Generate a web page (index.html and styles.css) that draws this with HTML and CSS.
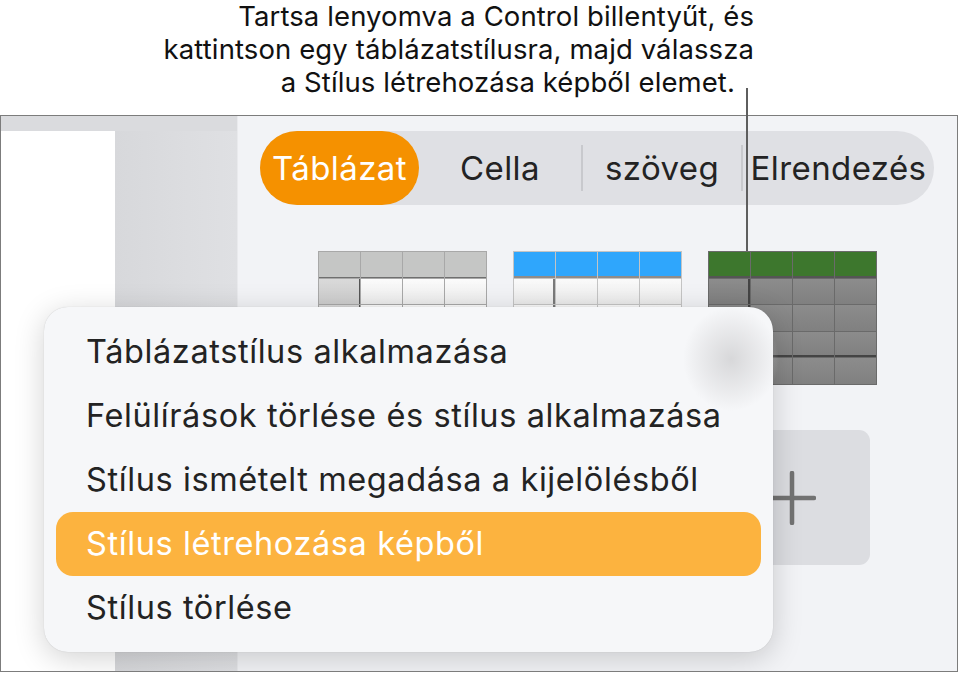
FILE: index.html
```html
<!DOCTYPE html>
<html lang="hu">
<head>
  <meta charset="UTF-8" />
  <meta name="viewport" content="width=device-width, initial-scale=1" />
  <title>Táblázatstílus létrehozása képből</title>
  <link rel="stylesheet" href="styles.css">
</head>
<body>
  <div class="callout">
    <p>Tartsa lenyomva a Control billentyűt, és<br>kattintson egy táblázatstílusra, majd válassza<br><span class="last">a Stílus létrehozása képből elemet.</span></p>
  </div>
  <div class="leader"></div>

  <div class="window">
    <aside class="sidebar">
      <div class="page"></div>
      <div class="gutter"></div>
    </aside>

    <main class="panel">
      <nav class="tabs">
        <span class="tab active">Táblázat</span>
        <span class="tab cell">Cella</span>
        <span class="sep"></span>
        <span class="tab text">szöveg</span>
        <span class="sep"></span>
        <span class="tab layout">Elrendezés</span>
      </nav>

      <div class="styles">
        <div class="thumb gray">
          <i class="h"></i><i class="h"></i><i class="h"></i><i class="h"></i>
          <i class="c1"></i><i></i><i></i><i></i>
          <i class="c1"></i><i></i><i></i><i></i>
          <i class="c1"></i><i></i><i></i><i></i>
          <i class="c1"></i><i></i><i></i><i></i>
        </div>
        <div class="thumb blue">
          <i class="h"></i><i class="h"></i><i class="h"></i><i class="h"></i>
          <i class="c1"></i><i></i><i></i><i></i>
          <i class="c1"></i><i></i><i></i><i></i>
          <i class="c1"></i><i></i><i></i><i></i>
          <i class="c1"></i><i></i><i></i><i></i>
        </div>
        <div class="thumb green">
          <i class="h"></i><i class="h"></i><i class="h"></i><i class="h"></i>
          <i class="c1"></i><i></i><i></i><i></i>
          <i class="c1"></i><i></i><i></i><i></i>
          <i class="c1 f"></i><i class="f"></i><i class="f"></i><i class="f"></i>
          <i class="c1"></i><i></i><i></i><i></i>
        </div>
      </div>

      <div class="styles second">
        <div class="slot"></div>
        <div class="slot"></div>
        <button class="add" title="Stílus hozzáadása">
          <svg width="48" height="54" viewBox="0 0 48 54"><path d="M24 2v50M2 27h44" stroke="#727272" stroke-width="4.5" stroke-linecap="round" fill="none"/></svg>
        </button>
      </div>
    </main>

    <ul class="menu">
      <li>Táblázatstílus alkalmazása</li>
      <li>Felülírások törlése és stílus alkalmazása</li>
      <li>Stílus ismételt megadása a kijelölésből</li>
      <li class="selected">Stílus létrehozása képből</li>
      <li>Stílus törlése</li>
    </ul>
  </div>
</body>
</html>
```

FILE: styles.css
```css
:root {
  --ui-font: 'Inter', 'Noto Sans', sans-serif;
  --text: #232323;
  --panel-bg: #f2f3f6;
  --orange: #f59100;
  --highlight: #fcb33f;
}

* { box-sizing: border-box; }

body {
  margin: 0;
  background: #fff;
  width: 960px;
  height: 673px;
  overflow: hidden;
  position: relative;
  font-family: var(--ui-font);
  color: var(--text);
}

/* caption above the screenshot */
.callout {
  display: flow-root;
  height: 115px;
  width: 754px;
  text-align: right;
  font-size: 27.5px;
  line-height: 33px;
  letter-spacing: 0.1px;
  color: #111;
}

.callout p {
  margin: 0;
}

.callout .last {
  margin-right: 19px;
}

.leader {
  position: absolute;
  left: 746px;
  top: 88px;
  width: 2px;
  height: 163px;
  background: #5e5e5e;
  z-index: 5;
}

/* screenshot frame */
.window {
  position: relative;
  width: 958px;
  height: 557px;
  border: 1px solid #7c7c7c;
  display: flex;
  overflow: hidden;
}

.sidebar {
  width: 237px;
  display: flex;
  padding-top: 15px;
  background: #dadbde;
  border-right: 1px solid #e9eaed;
}

.page {
  width: 114px;
  background: #fff;
}

.gutter {
  flex: 1;
  background: linear-gradient(90deg, #d7d8db, #dcdde0 60%, #dfe0e3);
}

.panel {
  flex: 1;
  background: var(--panel-bg);
  padding: 15px 0 0 22px;
}

/* segmented control */
.tabs {
  display: flex;
  align-items: center;
  width: 674px;
  height: 74px;
  border-radius: 37px;
  background: #dfe0e4;
  font-size: 33px;
  letter-spacing: 0.4px;
}

.tab {
  line-height: 74px;
  text-align: center;
  white-space: nowrap;
}

.tab.active {
  width: 159px;
  background: var(--orange);
  color: #fff;
  border-radius: 37px;
}

.tab.cell { width: 162px; }
.tab.text { width: 158px; }
.tab.layout { width: 191px; }

.sep {
  width: 2px;
  height: 46px;
  background: #c8c9cd;
}

/* style thumbnails */
.styles {
  display: flex;
  gap: 26px;
  margin: 46px 0 0 58px;
}

.thumb {
  width: 169px;
  height: 134px;
  display: grid;
  grid-template-columns: repeat(4, 1fr);
  grid-template-rows: repeat(5, 1fr);
  gap: 1px;
  padding: 1px;
}

.thumb i { display: block; }

.thumb.gray { background: #a8a8a8; }
.thumb.gray .h { background: #c5c6c5; border-bottom: 1px solid #6f6f6f; }
.thumb.gray i:not(.h) { background: linear-gradient(#fbfbfb, #ececec); }
.thumb.gray .c1 { background: linear-gradient(#d9d9d9, #cdcdcd) !important; border-right: 1px solid #555; }

.thumb.blue { background: #c4c4c4; }
.thumb.blue .h { background: #2fa6fc; border-bottom: 2px solid #8f8c89; }
.thumb.blue i:not(.h) { background: linear-gradient(#fafafa, #ebebeb); }
.thumb.blue .c1 { border-right: 2px solid #7a7a7a; }

.thumb.green { background: #6a6a6a; }
.thumb.green .h { background: #3d772d; border-bottom: 2px solid #555; }
.thumb.green i:not(.h) { background: linear-gradient(#8c8c8c, #808080); }
.thumb.green .c1 { border-right: 2px solid #444; }
.thumb.green .f { border-bottom: 2px solid #444; }

.second {
  margin-top: 45px;
}

.slot {
  width: 169px;
  height: 135px;
}

.add {
  width: 156px;
  height: 135px;
  margin-left: 6px;
  border: none;
  border-radius: 11px;
  background: #dcdde1;
  display: flex;
  align-items: center;
  justify-content: center;
  padding: 0;
}

/* context menu */
.menu {
  position: absolute;
  left: 43px;
  top: 191px;
  width: 729px;
  margin: 0;
  padding: 13px 12px 12px;
  list-style: none;
  border-radius: 24px;
  background: #f6f7f9;
  box-shadow: 0 6px 30px rgba(0, 0, 0, 0.18), 0 0 1px rgba(0, 0, 0, 0.2);
  font-size: 32.5px;
  letter-spacing: 0.6px;
  z-index: 4;
}

/* blurred table showing through the menu */
.menu::before {
  content: "";
  position: absolute;
  right: -6px;
  top: 0;
  width: 96px;
  height: 104px;
  border-radius: 50%;
  background: radial-gradient(closest-side, rgba(205, 205, 207, 0.75), rgba(218, 218, 220, 0.45) 60%, rgba(246, 247, 249, 0));
}

.menu li {
  position: relative;
  height: 64px;
  line-height: 64px;
  padding-left: 30px;
  border-radius: 17px;
  white-space: nowrap;
}

.menu li.selected {
  background: var(--highlight);
  color: #fff;
}
```
